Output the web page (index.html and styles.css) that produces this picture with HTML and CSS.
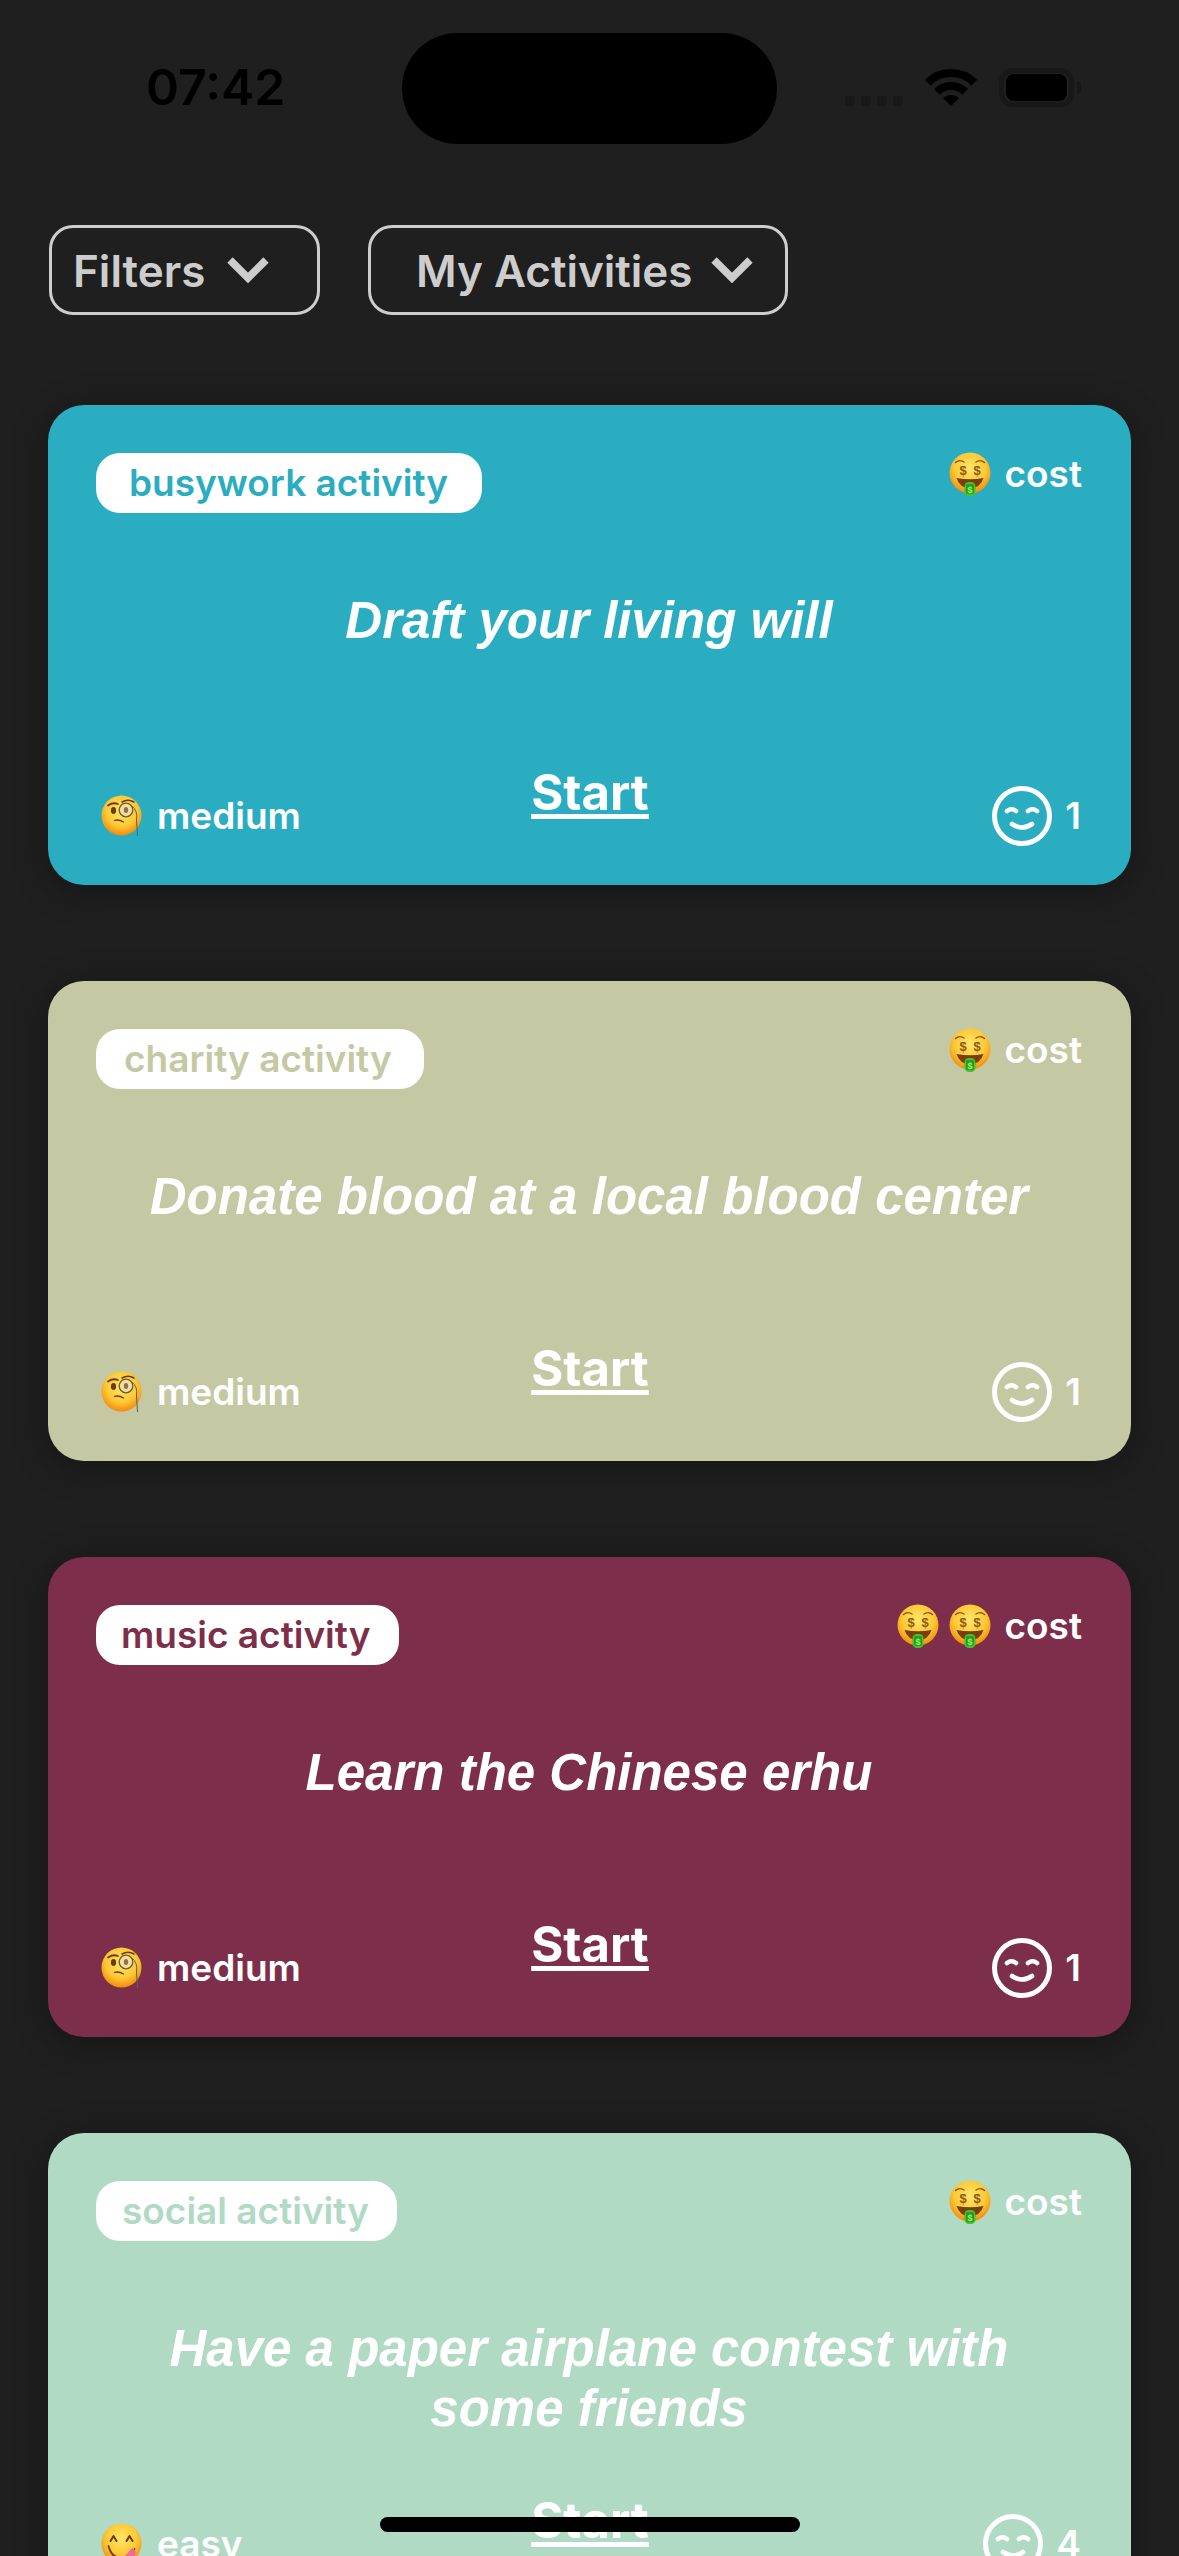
FILE: index.html
```html
<!DOCTYPE html>
<html lang="en">
<head>
<meta charset="utf-8">
<title>Activities</title>
<link rel="stylesheet" href="styles.css">
</head>
<body>
<svg class="defs" width="0" height="0" aria-hidden="true">
  <defs>
    <radialGradient id="face" cx="50%" cy="38%" r="62%">
      <stop offset="0" stop-color="#ffe66b"/>
      <stop offset=".62" stop-color="#fdc935"/>
      <stop offset="1" stop-color="#f08c0c"/>
    </radialGradient>
    <symbol id="money" viewBox="0 0 42 44">
      <circle cx="21" cy="21" r="20.500" fill="url(#face)"/>
      <path d="M6.500 10.500q4-3.500 8.500-.5M27 10q4.500-3 8.500.5" fill="none" stroke="#8a4a12" stroke-width="1.400" stroke-linecap="round"/>
      <text x="14" y="23" class="dollar">$</text>
      <text x="28" y="23" class="dollar">$</text>
      <path d="M7.500 26q13.500 2.500 27 0q-3 10-13.500 10T7.500 26z" fill="#7a3d12"/>
      <rect x="15.500" y="30" width="11" height="14" rx="4.500" fill="#3fc528"/>
      <rect x="17" y="32" width="8" height="10" rx="2" fill="#2a9d1c"/>
      <text x="21" y="40.500" class="bill">$</text>
    </symbol>
    <symbol id="monocle" viewBox="0 0 42 42">
      <circle cx="20.500" cy="20.500" r="20" fill="url(#face)"/>
      <path d="M7 10.500q5-3.500 10-1.500" fill="none" stroke="#6d3a10" stroke-width="1.800" stroke-linecap="round"/>
      <ellipse cx="12.500" cy="15.500" rx="2.600" ry="3.400" fill="#6d3a10"/>
      <path d="M21 7q6-3.500 12 0" fill="none" stroke="#6d3a10" stroke-width="1.500" stroke-linecap="round"/>
      <circle cx="25" cy="15" r="6.800" fill="#f3dfa0" stroke="#6f5a2a" stroke-width="1.300"/>
      <ellipse cx="25" cy="15" rx="2.200" ry="3" fill="#93704a"/>
      <path d="M31 11q6 5 4.500 14l1 16" fill="none" stroke="#5e5e5e" stroke-width="1"/>
      <path d="M13.500 25.500q4-1.500 9 1.500" fill="none" stroke="#6d3a10" stroke-width="1.300" stroke-linecap="round"/>
    </symbol>
    <symbol id="yum" viewBox="0 0 42 42">
      <circle cx="20.500" cy="20.500" r="20" fill="url(#face)"/>
      <path d="M9.500 18l3-5 3 5M25.500 18l3-5 3 5" fill="none" stroke="#6d3a10" stroke-width="2" stroke-linecap="round" stroke-linejoin="round"/>
      <path d="M7.500 23q3 12 13 12t13-9" fill="none" stroke="#6d3a10" stroke-width="1.800" stroke-linecap="round"/>
      <path d="M24 33l7-8q5 2 3 7t-7 5q-3-1-3-4z" fill="#f4699b"/>
    </symbol>
    <symbol id="smile" viewBox="0 0 60 60">
      <circle cx="30" cy="30" r="27.500" fill="none" stroke="#fff" stroke-width="5"/>
      <path d="M15 25q4.500-3.500 9 0M36 25q4.500-3.500 9 0M20 38q10 7 20 0" fill="none" stroke="#fff" stroke-width="4.600" stroke-linecap="round"/>
    </symbol>
    <symbol id="chevron" viewBox="0 0 44 28">
      <path d="M4 5l18 18L40 5" fill="none" stroke="#cdcdcd" stroke-width="7.500"/>
    </symbol>
  </defs>
</svg>

<div class="screen">
  <header class="status">
    <span class="time">07:42</span>
    <div class="island"></div>
    <div class="indicators">
      <span class="signal"><i></i><i></i><i></i><i></i></span>
      <svg class="wifi" viewBox="0 0 52 38"><path d="M2.700 13.700a33 33 0 0 1 46.600 0M11.900 22.900a20 20 0 0 1 28.200 0" fill="none" stroke="#000" stroke-width="8"/><path d="M26 37l-7.800-7.800a11 11 0 0 1 15.600 0z" fill="#000"/></svg>
      <span class="battery"><span class="battery-fill"></span></span>
      <span class="battery-nub"></span>
    </div>
  </header>

  <nav class="toolbar">
    <button class="pill pill-filters">Filters <svg class="chev"><use href="#chevron"/></svg></button>
    <button class="pill pill-mine">My Activities <svg class="chev"><use href="#chevron"/></svg></button>
  </nav>

  <main class="cards">
    <article class="card teal">
      <div class="card-top">
        <span class="tag">busywork activity</span>
        <span class="cost"><svg class="emoji-money"><use href="#money"/></svg><span class="cost-label">cost</span></span>
      </div>
      <h2 class="title">Draft your living will</h2>
      <div class="card-foot">
        <span class="level"><svg class="emoji"><use href="#monocle"/></svg>medium</span>
        <a class="start">Start</a>
        <span class="count"><svg class="smile"><use href="#smile"/></svg>1</span>
      </div>
    </article>

    <article class="card khaki">
      <div class="card-top">
        <span class="tag">charity activity</span>
        <span class="cost"><svg class="emoji-money"><use href="#money"/></svg><span class="cost-label">cost</span></span>
      </div>
      <h2 class="title">Donate blood at a local blood center</h2>
      <div class="card-foot">
        <span class="level"><svg class="emoji"><use href="#monocle"/></svg>medium</span>
        <a class="start">Start</a>
        <span class="count"><svg class="smile"><use href="#smile"/></svg>1</span>
      </div>
    </article>

    <article class="card maroon">
      <div class="card-top">
        <span class="tag">music activity</span>
        <span class="cost"><svg class="emoji-money"><use href="#money"/></svg><svg class="emoji-money"><use href="#money"/></svg><span class="cost-label">cost</span></span>
      </div>
      <h2 class="title">Learn the Chinese erhu</h2>
      <div class="card-foot">
        <span class="level"><svg class="emoji"><use href="#monocle"/></svg>medium</span>
        <a class="start">Start</a>
        <span class="count"><svg class="smile"><use href="#smile"/></svg>1</span>
      </div>
    </article>

    <article class="card mint">
      <div class="card-top">
        <span class="tag">social activity</span>
        <span class="cost"><svg class="emoji-money"><use href="#money"/></svg><span class="cost-label">cost</span></span>
      </div>
      <h2 class="title">Have a paper airplane contest with some friends</h2>
      <div class="card-foot">
        <span class="level"><svg class="emoji"><use href="#yum"/></svg>easy</span>
        <a class="start">Start</a>
        <span class="count"><svg class="smile"><use href="#smile"/></svg>4</span>
      </div>
    </article>
  </main>

  <div class="home-bar"></div>
</div>
</body>
</html>
```

FILE: styles.css
```css
* { box-sizing: border-box; }

html, body {
  margin: 0;
  padding: 0;
  background: #1f1f1f;
}

.defs { position: absolute; }

.screen {
  position: relative;
  width: 1179px;
  height: 2556px;
  overflow: hidden;
  background: #1f1f1f;
  font-family: Inter, "Liberation Sans", sans-serif;
  color: #fff;
}

/* status bar */
.status {
  display: flex;
  align-items: flex-start;
  justify-content: space-between;
  height: 225px;
  padding: 58px 98px 0 146px;
}

.time {
  font: 600 50px/58px Inter, sans-serif;
  color: #000;
}

.island {
  position: absolute;
  left: 402px;
  top: 33px;
  width: 375px;
  height: 111px;
  border-radius: 56px;
  background: #000;
}

.indicators {
  display: flex;
  align-items: flex-end;
  margin-top: 10px;
}

.signal { display: flex; gap: 6px; margin: 0 22px 1px 0; }
.signal i { width: 10px; height: 10px; border-radius: 3px; background: #181818; }

.wifi { width: 52px; height: 38px; margin-right: 22px; }

.battery {
  display: block;
  width: 75px;
  height: 39px;
  padding: 5px 6px;
  border: 1px solid #181818;
  box-shadow: inset 0 0 0 4px #181818;
  border-radius: 13px;
}

.battery-fill {
  display: block;
  height: 100%;
  border-radius: 8px;
  background: #000;
}

.battery-nub {
  width: 4px;
  height: 13px;
  margin: 0 0 13px 3px;
  border-radius: 0 7px 7px 0;
  background: #181818;
}

/* filter pills */
.toolbar {
  display: flex;
  gap: 48px;
  padding-left: 49px;
  height: 180px;
}

.pill {
  display: flex;
  align-items: center;
  height: 90px;
  padding: 0;
  border: 3px solid #cdcdcd;
  border-radius: 24px;
  background: transparent;
  color: #cdcdcd;
  font: 600 44px/1 Inter, sans-serif;
}

.pill-filters { width: 271px; padding: 2px 0 0 21px; gap: 21px; }
.pill-mine { width: 420px; padding: 2px 0 0 45px; gap: 17px; }

.chev { width: 44px; height: 28px; flex: none; margin-top: -4px; }

/* cards */
.cards {
  display: flex;
  flex-direction: column;
  gap: 96px;
  padding: 0 48px;
}

.card {
  display: flex;
  flex-direction: column;
  flex: none;
  height: 480px;
  padding: 48px 49px 39px 48px;
  border-radius: 36px;
  box-shadow: 0 6px 36px rgba(0, 0, 0, .32);
}

.teal { background: #2aadc0; color: #2aadc0; }
.khaki { background: #c4c9a3; color: #c4c9a3; }
.maroon { background: #7d2e4a; color: #7d2e4a; }
.mint { background: #b0dac3; color: #b0dac3; }

.card-top {
  display: flex;
  justify-content: space-between;
  align-items: flex-start;
}

.tag {
  height: 60px;
  border-radius: 24px;
  background: #fff;
  font: 600 37px/60px Inter, sans-serif;
}

.teal .tag { padding: 0 34px 0 33px; }
.khaki .tag { padding: 0 32px 0 28px; }
.maroon .tag { padding: 0 29px 0 25px; }
.mint .tag { padding: 0 28px 0 26px; }

.cost {
  display: flex;
  align-items: flex-start;
  gap: 10px;
  margin-top: -1px;
}

.emoji-money { width: 42px; height: 44px; }

.cost-label {
  margin-left: 4px;
  color: #fff;
  font: 600 37px/44px Inter, sans-serif;
}

.title {
  margin: 78px 0 0;
  padding: 0 30px;
  color: #fff;
  text-align: center;
  font: italic 700 51px/60px "Liberation Sans", Arial, sans-serif;
}

.card-foot {
  display: grid;
  grid-template-columns: 1fr auto 1fr;
  margin-top: auto;
  height: 83px;
  color: #fff;
}

.level {
  display: flex;
  align-items: center;
  gap: 14px;
  align-self: end;
  height: 41px;
  margin: 0 0 10px 5px;
  font: 600 37px/41px Inter, sans-serif;
}

.emoji { width: 42px; height: 42px; flex: none; }

.start {
  align-self: start;
  margin-left: 2px;
  color: #fff;
  font: 700 49px/60px Inter, sans-serif;
  text-decoration: underline;
  text-decoration-thickness: 5px;
  text-underline-offset: 4px;
  text-decoration-skip-ink: none;
}

.count {
  display: flex;
  align-items: center;
  justify-content: flex-end;
  gap: 13px;
  align-self: end;
  margin-right: 1px;
  font: 600 37px/60px Inter, sans-serif;
}

.smile { width: 60px; height: 60px; flex: none; }

/* svg text for the dollar signs in the emoji */
.dollar {
  font: 700 13px "Liberation Sans", sans-serif;
  fill: #8f5a10;
  text-anchor: middle;
}

.bill {
  font: 700 9px "Liberation Sans", sans-serif;
  fill: #9df07f;
  text-anchor: middle;
}

.home-bar {
  position: absolute;
  left: 380px;
  top: 2517px;
  width: 420px;
  height: 15px;
  border-radius: 8px;
  background: #000;
}
```
